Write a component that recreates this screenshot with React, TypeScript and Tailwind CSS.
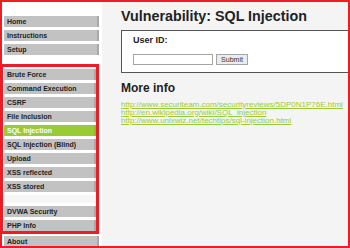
export default function App() {
  const top = ["Home", "Instructions", "Setup"];
  const vulns = [
    "Brute Force",
    "Command Execution",
    "CSRF",
    "File Inclusion",
    "SQL Injection",
    "SQL Injection (Blind)",
    "Upload",
    "XSS reflected",
    "XSS stored",
  ];
  const links = [
    "http://www.securiteam.com/securityreviews/5DP0N1P76E.html",
    "http://en.wikipedia.org/wiki/SQL_injection",
    "http://www.unixwiz.net/techtips/sql-injection.html",
  ];

  const item = (label: string, active = false) => (
    <div
      key={label}
      className={
        "flex h-[11px] items-center whitespace-nowrap border-r-2 pl-[3px] text-[7px] font-bold leading-none " +
        (active
          ? "border-[#8dbb2a] bg-[#99cc33] text-white"
          : "border-[#a9a9a9] bg-[#c2c2c2] text-[#222]")
      }
    >
      {label}
    </div>
  );

  return (
    <div className="h-[248px] w-[350px] overflow-hidden border-[2px] border-[#ee1c24] bg-white font-['Liberation_Sans',Arial,sans-serif]">
      <div className="flex h-full">
        <div className="flex w-[100px] shrink-0 flex-col bg-white">
          <div className="ml-[2px] flex w-[95px] flex-col gap-[3px] pt-[14px]">
            {top.map((t) => item(t))}
          </div>
          <div className="ml-[-2px] mt-[9px] flex w-[99px] flex-col gap-[3px] border-[3px] border-[#ee1c24] pl-[1px] pt-[2px]">
            {vulns.map((v) => item(v, v === "SQL Injection"))}
            <div className="h-[8px] bg-[#f6f6f6]" />
            {item("DVWA Security")}
            {item("PHP Info")}
          </div>
          <div className="ml-[2px] mt-[2px] flex w-[95px] flex-col">{item("About")}</div>
        </div>
        <div className="flex-1 bg-[#f4f4f4] pl-[19px] pt-[5.5px]">
          <h1 className="text-[14.3px] font-bold leading-[17px] text-[#222]">
            Vulnerability: SQL Injection
          </h1>
          <div className="mr-[-2px] mt-[5px] h-[43px] border border-[#555] bg-white pl-[11px] pt-[4.5px]">
            <div className="text-[9px] font-bold leading-[11px] text-[#222]">User ID:</div>
            <div className="mt-[8px] flex items-center gap-[3px]">
              <div className="h-[11px] w-[80px] border border-[#a5a5a5] bg-white" />
              <div className="flex h-[11px] w-[32px] items-center justify-center border border-[#a5a5a5] bg-[#ececec] text-[7px] leading-none text-[#333]">
                Submit
              </div>
            </div>
          </div>
          <h2 className="mt-[8px] text-[12px] font-bold leading-[14px] text-[#222]">More info</h2>
          <div className="mt-[6px] flex flex-col">
            {links.map((l) => (
              <a key={l} className="whitespace-nowrap text-[8px] leading-[8.3px] text-[#99cc33] underline">
                {l}
              </a>
            ))}
          </div>
        </div>
      </div>
    </div>
  );
}
